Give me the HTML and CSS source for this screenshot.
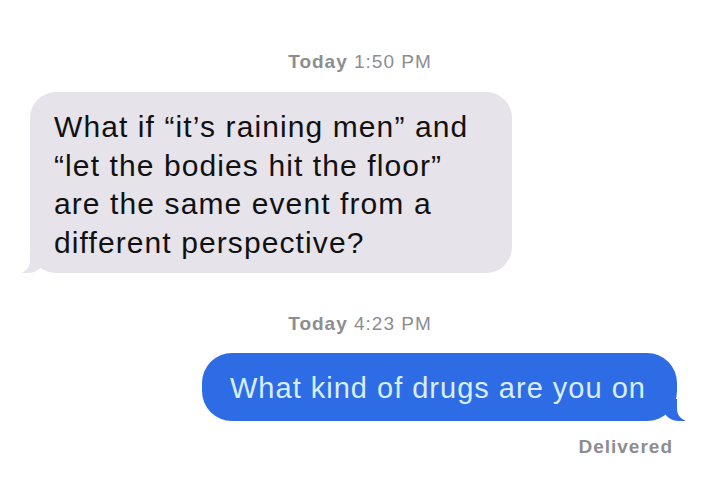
FILE: index.html
```html
<!DOCTYPE html>
<html lang="en">
<head>
    <meta charset="UTF-8">
    <title>Messages</title>
    <link rel="stylesheet" href="styles.css">
</head>
<body>
    <div class="thread">
        <div class="stamp"><b>Today</b> 1:50 PM</div>

        <div class="row incoming">
            <div class="bubble grey">What if “it’s raining men” and “let the bodies hit the floor” are the same event from a different perspective?</div>
        </div>

        <div class="stamp second"><b>Today</b> 4:23 PM</div>

        <div class="row outgoing">
            <div class="bubble blue">What kind of drugs are you on</div>
        </div>

        <div class="status">Delivered</div>
    </div>
</body>
</html>
```

FILE: styles.css
```css
body {
    margin: 0;
    padding: 0;
    background: #fff;
    font-family: 'Liberation Sans', Arial, sans-serif;
    color: #111;
}

.thread {
    display: flex;
    flex-direction: column;
    width: 720px;
    height: 490px;
}

.stamp {
    margin-top: 51px;
    text-align: center;
    font-size: 19px;
    line-height: 22px;
    letter-spacing: 1px;
    color: #8d8d91;
}

.stamp b {
    font-weight: bold;
}

.stamp.second {
    margin-top: 40px;
}

.row {
    display: flex;
}

.row.incoming {
    margin-top: 19px;
    padding-left: 30px;
}

.row.outgoing {
    margin-top: 18px;
    justify-content: flex-end;
    padding-right: 43px;
}

.bubble {
    position: relative;
    box-sizing: border-box;
}

.bubble.grey {
    width: 482px;
    padding: 16px 24px 11px;
    font-size: 30px;
    line-height: 38.5px;
    letter-spacing: 1.1px;
    background: #e6e3ea;
    border-radius: 26px;
}

.bubble.blue {
    width: 475px;
    height: 68px;
    padding: 0 28px;
    font-size: 29px;
    line-height: 70px;
    letter-spacing: 1px;
    background: #2e6ce6;
    color: #d8eeff;
    border-radius: 30px;
}

/* tails */
.bubble::before,
.bubble::after {
    content: "";
    position: absolute;
    bottom: 0;
    height: 22px;
}

.bubble.grey::before {
    left: -8px;
    width: 22px;
    background: #e6e3ea;
    border-bottom-right-radius: 16px 14px;
}

.bubble.grey::after {
    left: -28px;
    width: 28px;
    background: #fff;
    border-bottom-right-radius: 12px;
}

.bubble.blue::before {
    right: -8px;
    width: 22px;
    background: #2e6ce6;
    border-bottom-left-radius: 16px 14px;
}

.bubble.blue::after {
    right: -28px;
    width: 28px;
    background: #fff;
    border-bottom-left-radius: 12px;
}

.status {
    margin-top: 15px;
    align-self: flex-end;
    padding-right: 47px;
    font-size: 19px;
    line-height: 22px;
    letter-spacing: 1px;
    font-weight: bold;
    color: #8d8d91;
}
```
